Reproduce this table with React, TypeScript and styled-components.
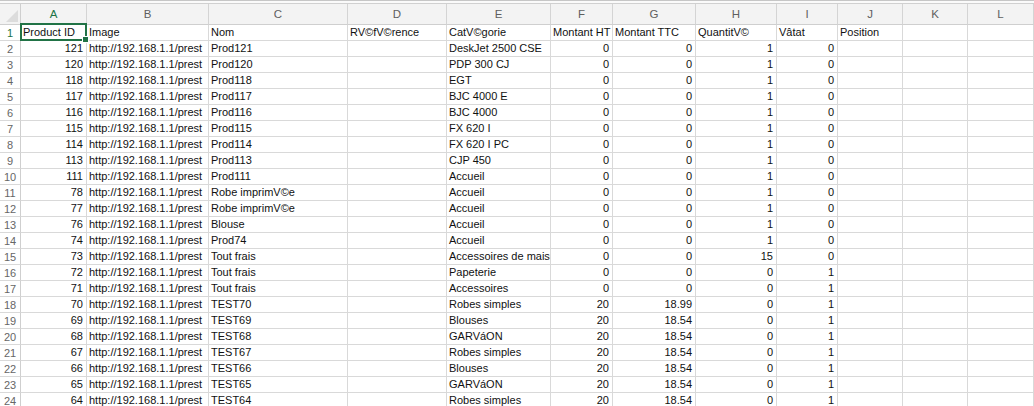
import React from "react";
import styled, { createGlobalStyle, css } from "styled-components";

const GlobalStyle = createGlobalStyle`
  html, body { margin: 0; padding: 0; background: #ffffff; }
  body { font-family: "Liberation Sans", Arial, sans-serif; overflow: hidden; }
`;

const COLS = [66, 122, 139, 99, 104, 62, 83, 81, 61, 65, 65, 66];
const LETTERS = ["A", "B", "C", "D", "E", "F", "G", "H", "I", "J", "K", "L"];
const GREEN = "#217346";
const GRID = "#d9d9d9";

const Page = styled.div`
  width: 1034px;
  height: 406px;
  overflow: hidden;
`;

const TopStrip = styled.div`
  height: 4px;
  box-sizing: border-box;
  border-top: 1px solid #c6c6c6;
  border-bottom: 1px solid #d0d0d0;
  background: #fafafa;
`;

const Sheet = styled.div`
  display: grid;
  grid-template-columns: 21px ${COLS.map((c) => `${c}px`).join(" ")};
  grid-template-rows: 21px;
  grid-auto-rows: 16px;
  font-size: 11px;
  color: #111;
`;

const Corner = styled.div`
  position: relative;
  background: #f3f3f3;
  border-right: 1px solid #cfcfcf;
  border-bottom: 1px solid #cfcfcf;
  box-sizing: border-box;
  &::after {
    content: "";
    position: absolute;
    right: 2px;
    bottom: 2px;
    width: 12px;
    height: 12px;
    background: #dcdcdc;
    clip-path: polygon(100% 0, 100% 100%, 0 100%);
  }
`;

const ColHeader = styled.div<{ $active?: boolean }>`
  display: flex;
  align-items: center;
  justify-content: center;
  background: #f3f3f3;
  box-sizing: border-box;
  border-right: 1px solid #d4d4d4;
  border-bottom: 1px solid #cfcfcf;
  color: #5f5f5f;
  font-size: 11.5px;
  ${(p) =>
    p.$active &&
    css`
      color: ${GREEN};
      border-bottom: 2px solid ${GREEN};
      padding-top: 1px;
    `}
`;

const RowHeader = styled.div<{ $active?: boolean }>`
  display: flex;
  align-items: center;
  justify-content: center;
  background: #ffffff;
  box-sizing: border-box;
  border-right: 1px solid #cfcfcf;
  border-bottom: 1px solid ${GRID};
  color: ${(p) => (p.$active ? GREEN : "#666666")};
  font-size: 11px;
`;

const Cell = styled.div<{ $num?: boolean }>`
  position: relative;
  display: flex;
  align-items: center;
  justify-content: ${(p) => (p.$num ? "flex-end" : "flex-start")};
  padding: ${(p) => (p.$num ? "0 3px 0 2px" : "0 2px 0 2px")};
  box-sizing: border-box;
  border-right: 1px solid ${GRID};
  border-bottom: 1px solid ${GRID};
  white-space: nowrap;
  overflow: hidden;
  line-height: 15px;
`;

const ActiveCell = styled(Cell)`
  overflow: visible;
  z-index: 2;
`;

const Selection = styled.div`
  position: absolute;
  left: -1px;
  top: -2px;
  right: -1px;
  bottom: -1px;
  border: 2px solid ${GREEN};
  pointer-events: none;
  &::after {
    content: "";
    position: absolute;
    right: -4px;
    bottom: -4px;
    width: 5px;
    height: 5px;
    background: ${GREEN};
    border: 1px solid #fff;
  }
`;

const CellText = styled.span`
  position: relative;
  z-index: 1;
`;

type Row = [number | "", string, string, string, string, number | string, number | string, number | string, number | string];

const URL = "http://192.168.1.1/prest";

const rows: Row[] = [
  [121, URL, "Prod121", "", "DeskJet 2500 CSE", 0, 0, 1, 0],
  [120, URL, "Prod120", "", "PDP 300 CJ", 0, 0, 1, 0],
  [118, URL, "Prod118", "", "EGT", 0, 0, 1, 0],
  [117, URL, "Prod117", "", "BJC 4000 E", 0, 0, 1, 0],
  [116, URL, "Prod116", "", "BJC 4000", 0, 0, 1, 0],
  [115, URL, "Prod115", "", "FX 620 I", 0, 0, 1, 0],
  [114, URL, "Prod114", "", "FX 620 I PC", 0, 0, 1, 0],
  [113, URL, "Prod113", "", "CJP 450", 0, 0, 1, 0],
  [111, URL, "Prod111", "", "Accueil", 0, 0, 1, 0],
  [78, URL, "Robe imprimV©e", "", "Accueil", 0, 0, 1, 0],
  [77, URL, "Robe imprimV©e", "", "Accueil", 0, 0, 1, 0],
  [76, URL, "Blouse", "", "Accueil", 0, 0, 1, 0],
  [74, URL, "Prod74", "", "Accueil", 0, 0, 1, 0],
  [73, URL, "Tout frais", "", "Accessoires de maison", 0, 0, 15, 0],
  [72, URL, "Tout frais", "", "Papeterie", 0, 0, 0, 1],
  [71, URL, "Tout frais", "", "Accessoires", 0, 0, 0, 1],
  [70, URL, "TEST70", "", "Robes simples", 20, 18.99, 0, 1],
  [69, URL, "TEST69", "", "Blouses", 20, 18.54, 0, 1],
  [68, URL, "TEST68", "", "GARVáON", 20, 18.54, 0, 1],
  [67, URL, "TEST67", "", "Robes simples", 20, 18.54, 0, 1],
  [66, URL, "TEST66", "", "Blouses", 20, 18.54, 0, 1],
  [65, URL, "TEST65", "", "GARVáON", 20, 18.54, 0, 1],
  [64, URL, "TEST64", "", "Robes simples", 20, 18.54, 0, 1],
];

const headers = [
  "Product ID",
  "Image",
  "Nom",
  "RV©fV©rence",
  "CatV©gorie",
  "Montant HT",
  "Montant TTC",
  "QuantitV©",
  "Vâtat",
  "Position",
  "",
  "",
];

export default function App() {
  return (
    <Page>
      <GlobalStyle />
      <TopStrip />
      <Sheet>
        <Corner />
        {LETTERS.map((l, i) => (
          <ColHeader key={l} $active={i === 0}>
            {l}
          </ColHeader>
        ))}

        <RowHeader $active>1</RowHeader>
        {headers.map((h, i) =>
          i === 0 ? (
            <ActiveCell key={i}>
              <CellText>{h}</CellText>
              <Selection />
            </ActiveCell>
          ) : (
            <Cell key={i}>{h}</Cell>
          )
        )}

        {rows.map((r, ri) => (
          <React.Fragment key={ri}>
            <RowHeader>{ri + 2}</RowHeader>
            <Cell $num>{r[0]}</Cell>
            <Cell>{r[1]}</Cell>
            <Cell>{r[2]}</Cell>
            <Cell>{r[3]}</Cell>
            <Cell>{r[4]}</Cell>
            <Cell $num>{r[5]}</Cell>
            <Cell $num>{r[6]}</Cell>
            <Cell $num>{r[7]}</Cell>
            <Cell $num>{r[8]}</Cell>
            <Cell />
            <Cell />
            <Cell />
          </React.Fragment>
        ))}
      </Sheet>
    </Page>
  );
}
